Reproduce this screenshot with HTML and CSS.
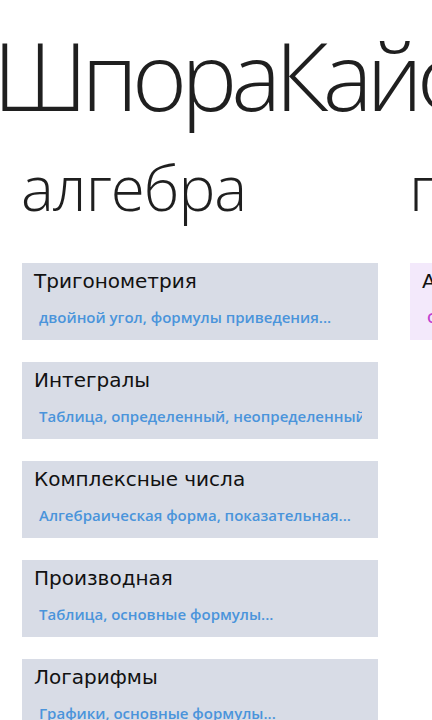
FILE: index.html
```html
<!DOCTYPE html>
<html lang="ru">
<head>
<meta charset="utf-8">
<link rel="stylesheet" href="styles.css">
</head>
<body>
<div class="pano">
  <h1 class="pano-title">ШпораКайф</h1>
  <div class="sections">
    <section class="section">
      <h2 class="section-title">алгебра</h2>
      <div class="cards">
        <div class="card">
          <div class="card-title">Тригонометрия</div>
          <div class="card-sub">двойной угол, формулы приведения...</div>
        </div>
        <div class="card">
          <div class="card-title">Интегралы</div>
          <div class="card-sub">Таблица, определенный, неопределенный</div>
        </div>
        <div class="card">
          <div class="card-title">Комплексные числа</div>
          <div class="card-sub">Алгебраическая форма, показательная...</div>
        </div>
        <div class="card">
          <div class="card-title">Производная</div>
          <div class="card-sub">Таблица, основные формулы...</div>
        </div>
        <div class="card">
          <div class="card-title">Логарифмы</div>
          <div class="card-sub">Графики, основные формулы...</div>
        </div>
      </div>
    </section>
    <section class="section">
      <h2 class="section-title">геометрия</h2>
      <div class="cards">
        <div class="card card-alt">
          <div class="card-title">Аксиомы</div>
          <div class="card-sub">Основные понятия...</div>
        </div>
      </div>
    </section>
  </div>
</div>
</body>
</html>
```

FILE: styles.css
```css
html, body {
  margin: 0;
  padding: 0;
  background: #ffffff;
}
body {
  width: 432px;
  height: 720px;
  overflow: hidden;
}
.pano {
  width: 432px;
  height: 720px;
  overflow: hidden;
}
.pano-title {
  margin: 0 0 0 -7px;
  padding-top: 10px;
  font-family: "Open Sans", sans-serif;
  font-weight: 300;
  font-size: 94px;
  letter-spacing: -6px;
  line-height: 130px;
  height: 140px;
  box-sizing: border-box;
  color: #1f1f1f;
  white-space: nowrap;
}
.sections {
  display: flex;
  flex-wrap: nowrap;
  padding-left: 22px;
  width: 800px;
}
.section {
  width: 356px;
  flex: none;
  margin-right: 32px;
}
.section-title {
  margin: 0 0 0 -1px;
  font-family: "Open Sans", sans-serif;
  font-weight: 300;
  font-size: 62px;
  letter-spacing: -1px;
  line-height: 94px;
  height: 123px;
  color: #1f1f1f;
  white-space: nowrap;
}
.cards {
  display: flex;
  flex-direction: column;
  gap: 22px;
}
.card {
  background: #d8dce6;
  height: 77px;
  box-sizing: border-box;
  padding: 4px 16px 0 12px;
  overflow: hidden;
}
.card-alt {
  background: #f3e9fb;
}
.card-title {
  font-family: "DejaVu Sans", sans-serif;
  font-size: 20px;
  line-height: 28px;
  color: #111111;
  white-space: nowrap;
}
.card-sub {
  margin-top: 12px;
  padding-left: 5px;
  font-family: "Open Sans", sans-serif;
  font-weight: 600;
  font-size: 15px;
  line-height: 20px;
  color: #4a94db;
  white-space: nowrap;
  overflow: hidden;
}
.card-alt .card-sub {
  color: #c040d0;
}
```
